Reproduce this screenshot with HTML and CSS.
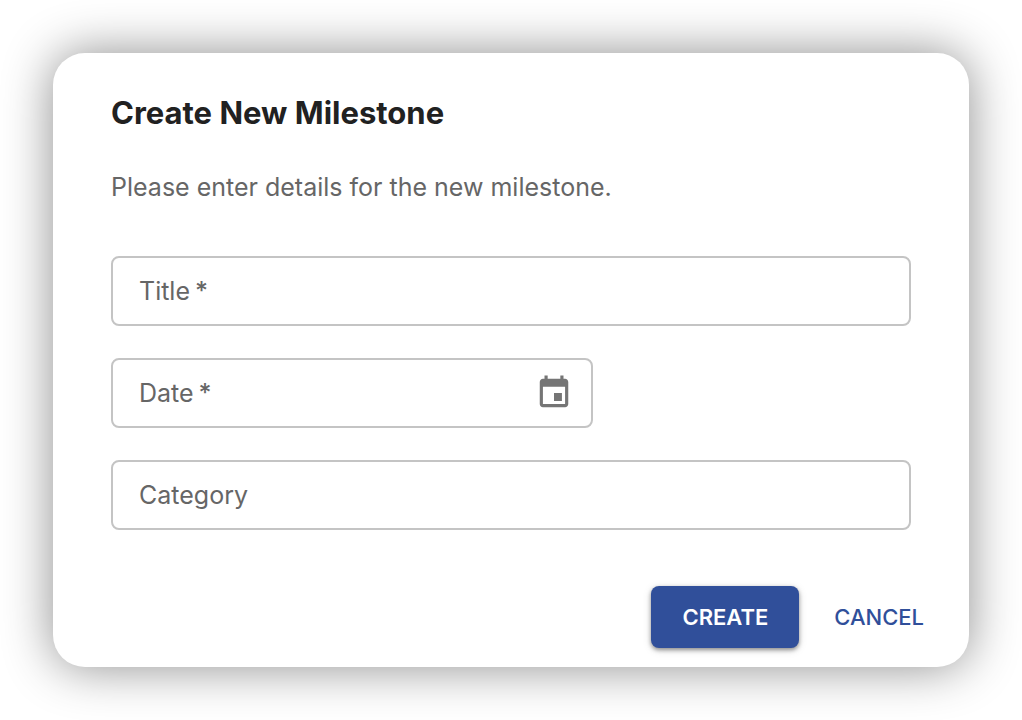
FILE: index.html
```html
<!DOCTYPE html>
<html lang="en">
<head>
    <meta charset="UTF-8">
    <meta name="viewport" content="width=device-width, initial-scale=1.0">
    <title>Create New Milestone</title>
    <link rel="stylesheet" href="styles.css">
</head>
<body>
    <form class="dialog" role="dialog" aria-labelledby="dialog-title">
        <h1 id="dialog-title">Create New Milestone</h1>
        <p class="description">Please enter details for the new milestone.</p>

        <div class="fields">
            <div class="field">
                <label for="title">Title<span class="required">*</span></label>
                <input type="text" id="title" required>
            </div>

            <div class="field field-date">
                <label for="date">Date<span class="required">*</span></label>
                <input type="text" id="date" required>
                <button type="button" class="icon-button" aria-label="Choose date">
                    <svg viewBox="0 0 24 24" aria-hidden="true">
                        <path d="M17 12h-5v5h5v-5zM16 1v2H8V1H6v2H5c-1.11 0-1.99.9-1.99 2L3 19c0 1.1.89 2 2 2h14c1.1 0 2-.9 2-2V5c0-1.1-.9-2-2-2h-1V1h-2zm3 18H5V8h14v11z"/>
                    </svg>
                </button>
            </div>

            <div class="field">
                <label for="category">Category</label>
                <input type="text" id="category">
            </div>
        </div>

        <div class="actions">
            <button type="submit" class="button button-primary">CREATE</button>
            <button type="button" class="button">CANCEL</button>
        </div>
    </form>
</body>
</html>
```

FILE: styles.css
```css
/* General styles */
* {
    box-sizing: border-box;
}

body {
    margin: 0;
    padding: 53px;
    font-family: Inter, "Liberation Sans", sans-serif;
    font-size: 25px;
    color: #666666;
    background-color: #ffffff;
}

/* Dialog styles */
.dialog {
    padding: 40px 58px 19px;
    background-color: #ffffff;
    border-radius: 32px;
    box-shadow: 0 0 50px rgba(0, 0, 0, 0.45);
}

h1 {
    margin: 0;
    font-size: 31px;
    line-height: 40px;
    font-weight: 700;
    color: #212121;
}

.description {
    margin: 34px 0 49px;
    line-height: 40px;
}

/* Field styles */
.fields {
    display: flex;
    flex-direction: column;
    gap: 32px;
}

.field {
    display: flex;
    align-items: center;
    height: 70px;
    padding: 0 18px 0 26px;
    border: 2px solid #c4c4c4;
    border-radius: 8px;
}

.field:focus-within {
    border-color: #304f9a;
}

.field-date {
    max-width: 482px;
}

.field input {
    flex: 1;
    min-width: 0;
    padding: 0 8px;
    border: none;
    outline: none;
    background: none;
    font: inherit;
    color: #212121;
}

.required {
    margin-left: 5px;
    font-weight: 500;
}

.icon-button {
    display: flex;
    padding: 0;
    border: none;
    background: none;
    cursor: pointer;
}

.icon-button svg {
    width: 38px;
    height: 38px;
    fill: #757575;
}

/* Button styles */
.actions {
    display: flex;
    justify-content: flex-end;
    gap: 20px;
    margin-top: 56px;
    margin-right: -28px;
}

.button {
    height: 62px;
    padding: 0 15px;
    border: none;
    border-radius: 8px;
    background: none;
    font-family: inherit;
    font-size: 22px;
    font-weight: 500;
    color: #304f9a;
    cursor: pointer;
}

.button-primary {
    padding: 0 31px;
    font-weight: 600;
    color: #ffffff;
    background-color: #304f9a;
    box-shadow: 0 2px 4px rgba(0, 0, 0, 0.4), 0 2px 10px rgba(0, 0, 0, 0.12);
}
```
